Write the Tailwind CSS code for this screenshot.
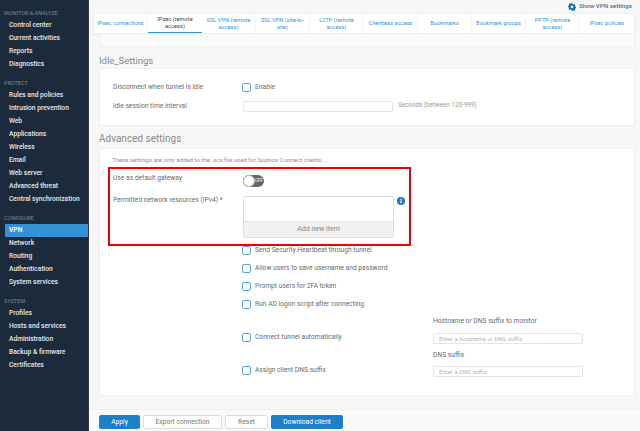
<!DOCTYPE html>
<html lang="en">
<head>
    <meta charset="UTF-8">
    <title>VPN - IPsec (remote access)</title>
    <script src="https://cdn.jsdelivr.net/npm/@tailwindcss/browser@4"></script>
</head>
<body class="w-[640px] h-[431px] overflow-hidden flex bg-[#f7f7f7] font-['Roboto','Liberation_Sans',sans-serif] text-[6.7px] text-[#6b6b6b]">
    <!-- Sidebar -->
    <nav class="w-[89px] h-full shrink-0 bg-[#1c2b3c] pt-[10px] border-r border-[#2c3a49] text-[#e4e8ec] text-[6.7px] font-medium whitespace-nowrap">
        <p class="h-[7px] leading-[7px] pl-[4px] text-[5.5px] font-normal text-[#7b8794]">MONITOR &amp; ANALYZE</p>
        <div class="mt-[2px]">
            <a class="block h-[13px] leading-[13px] pl-[9px]">Control center</a>
            <a class="block h-[13px] leading-[13px] pl-[9px]">Current activities</a>
            <a class="block h-[13px] leading-[13px] pl-[9px]">Reports</a>
            <a class="block h-[13px] leading-[13px] pl-[9px]">Diagnostics</a>
        </div>
        <p class="mt-[9px] h-[7px] leading-[7px] pl-[4px] text-[5.5px] font-normal text-[#7b8794]">PROTECT</p>
        <div class="mt-[2px]">
            <a class="block h-[13px] leading-[13px] pl-[9px]">Rules and policies</a>
            <a class="block h-[13px] leading-[13px] pl-[9px]">Intrusion prevention</a>
            <a class="block h-[13px] leading-[13px] pl-[9px]">Web</a>
            <a class="block h-[13px] leading-[13px] pl-[9px]">Applications</a>
            <a class="block h-[13px] leading-[13px] pl-[9px]">Wireless</a>
            <a class="block h-[13px] leading-[13px] pl-[9px]">Email</a>
            <a class="block h-[13px] leading-[13px] pl-[9px]">Web server</a>
            <a class="block h-[13px] leading-[13px] pl-[9px]">Advanced threat</a>
            <a class="block h-[13px] leading-[13px] pl-[9px]">Central synchronization</a>
        </div>
        <p class="mt-[9px] h-[7px] leading-[7px] pl-[4px] text-[5.5px] font-normal text-[#7b8794]">CONFIGURE</p>
        <div class="mt-[2px]">
            <a class="block h-[13px] leading-[13px] pl-[4px] ml-[5px] bg-[#3392d3] text-white font-semibold">VPN</a>
            <a class="block h-[13px] leading-[13px] pl-[9px]">Network</a>
            <a class="block h-[13px] leading-[13px] pl-[9px]">Routing</a>
            <a class="block h-[13px] leading-[13px] pl-[9px]">Authentication</a>
            <a class="block h-[13px] leading-[13px] pl-[9px]">System services</a>
        </div>
        <p class="mt-[9px] h-[7px] leading-[7px] pl-[4px] text-[5.5px] font-normal text-[#7b8794]">SYSTEM</p>
        <div class="mt-[2px]">
            <a class="block h-[13px] leading-[13px] pl-[9px]">Profiles</a>
            <a class="block h-[13px] leading-[13px] pl-[9px]">Hosts and services</a>
            <a class="block h-[13px] leading-[13px] pl-[9px]">Administration</a>
            <a class="block h-[13px] leading-[13px] pl-[9px]">Backup &amp; firmware</a>
            <a class="block h-[13px] leading-[13px] pl-[9px]">Certificates</a>
        </div>
    </nav>

    <!-- Main -->
    <main class="relative flex-1 h-full flex flex-col min-w-0">
        <div class="flex-1 min-h-0 pl-[4px] pr-[5px]">
            <div class="h-[13px] flex items-center justify-end gap-[3px] pr-[3px] text-[#4a6f8f] text-[6.2px] font-medium">
                <svg class="w-[8px] h-[8px]" viewBox="0 0 24 24" fill="#1c6ea4"><path d="M10 1h4l.7 3.2 2 .8 2.8-1.8 2.8 2.8-1.8 2.8.8 2 3.2.7v4l-3.2.7-.8 2 1.8 2.8-2.8 2.8-2.8-1.8-2 .8L14 23h-4l-.7-3.2-2-.8-2.8 1.8-2.8-2.8 1.8-2.8-.8-2L-.5 13V9l3.2-.7.8-2L1.700 3.500 4.500.7l2.800 1.800 2-.8zM12 8a4 4 0 1 0 0 8 4 4 0 0 0 0-8z" fill-rule="evenodd"/></svg>
                Show VPN settings
            </div>

            <!-- Tabs -->
            <div class="h-[21px] grid grid-cols-10 bg-white border border-[#eeeeee] text-[#3b93d3] text-center text-[5.7px] leading-[7px] shadow-[0_1px_1px_rgba(0,0,0,0.05)]">
                <a class="flex items-center justify-center border-r border-[#f3f3f3] whitespace-nowrap">IPsec connections</a>
                <a class="flex items-center justify-center px-[5px] text-[#444] border-b border-[#3392d3]">IPsec (remote access)</a>
                <a class="flex items-center justify-center px-[3px] border-r border-[#f3f3f3]">SSL VPN (remote access)</a>
                <a class="flex items-center justify-center px-[3px] border-r border-[#f3f3f3]">SSL VPN (site-to-site)</a>
                <a class="flex items-center justify-center px-[5px] border-r border-[#f3f3f3]">L2TP (remote access)</a>
                <a class="flex items-center justify-center border-r border-[#f3f3f3] whitespace-nowrap">Clientless access</a>
                <a class="flex items-center justify-center border-r border-[#f3f3f3] whitespace-nowrap">Bookmarks</a>
                <a class="flex items-center justify-center border-r border-[#f3f3f3] whitespace-nowrap">Bookmark groups</a>
                <a class="flex items-center justify-center px-[5px] border-r border-[#f3f3f3]">PPTP (remote access)</a>
                <a class="flex items-center justify-center whitespace-nowrap">IPsec policies</a>
            </div>

            <div class="ml-[6px] h-[13px] bg-[#fafafa] border border-t-0 border-[#eeeeee]"></div>

            <h2 class="ml-[6px] mt-[7px] h-[13px] leading-[13px] text-[9.5px] text-[#8a8a8a]">Idle_Settings</h2>
            <section class="ml-[6px] mt-[1px] h-[58px] bg-white border border-[#eeeeee] pl-[13px] pt-[12px]">
                <div class="flex items-center h-[12px]">
                    <span class="w-[130px]">Disconnect when tunnel is idle</span>
                    <span class="w-[9px] h-[9px] -ml-[1px] rounded-[2px] border border-[#5aa5de] mr-[4px]"></span>
                    Enable
                </div>
                <div class="flex items-center h-[12px] mt-[7px]">
                    <span class="w-[130px]">Idle session time interval</span>
                    <span class="w-[150px] h-[11px] rounded-[2px] border border-[#e4e4e4] mr-[5px]"></span>
                    <span class="text-[#9a9a9a] text-[6.3px]">Seconds (between 120-999)</span>
                </div>
            </section>

            <h2 class="ml-[6px] mt-[6px] h-[13px] leading-[13px] text-[10px] text-[#8a8a8a]">Advanced settings</h2>
            <section class="ml-[6px] mt-[3px] h-[248px] bg-white border border-[#eeeeee] pl-[13px]">
                <p class="mt-[7px] -ml-[1px] h-[8px] leading-[8px] text-[6.1px] text-[#8f8f8f]">These settings are only added to the .scx file used for Sophos Connect clients.</p>
                <div class="flex items-start mt-[11px] h-[17px]">
                    <span class="w-[130px] -mt-[2px] leading-[10px]">Use as default gateway</span>
                    <span class="relative w-[21px] h-[12px] rounded-full bg-[#666] text-white text-[4.5px] leading-[12px] pl-[12px]">
                        OFF
                        <span class="absolute left-0 top-0 w-[12px] h-[12px] rounded-full bg-white border border-[#bbb]"></span>
                    </span>
                </div>
                <div class="flex items-start mt-[4px]">
                    <span class="w-[130px] -mt-[1px] leading-[10px] whitespace-nowrap">Permitted network resources (IPv4) *</span>
                    <div class="w-[151px] h-[42px] rounded-[2px] border border-[#dddddd] flex flex-col">
                        <div class="flex-1"></div>
                        <div class="h-[16px] bg-[#f0f0f0] border-t border-[#e4e4e4] text-center leading-[15px] text-[#888] text-[7px]">Add new item</div>
                    </div>
                    <svg class="ml-[3px] mt-[1px] w-[8px] h-[8px]" viewBox="0 0 16 16"><circle cx="8" cy="8" r="8" fill="#1e78c2"/><rect x="6.800" y="7" width="2.400" height="5.500" fill="#fff"/><circle cx="8" cy="4.500" r="1.400" fill="#fff"/></svg>
                </div>
                <div class="ml-[130px] mt-[7px] flex items-center h-[10px] gap-[4px]"><span class="w-[9px] h-[9px] -ml-[1px] rounded-[2px] border border-[#5aa5de]"></span>Send Security Heartbeat through tunnel</div>
                <div class="ml-[130px] mt-[8px] flex items-center h-[10px] gap-[4px]"><span class="w-[9px] h-[9px] -ml-[1px] rounded-[2px] border border-[#5aa5de]"></span>Allow users to save username and password</div>
                <div class="ml-[130px] mt-[8px] flex items-center h-[10px] gap-[4px]"><span class="w-[9px] h-[9px] -ml-[1px] rounded-[2px] border border-[#5aa5de]"></span>Prompt users for 2FA token</div>
                <div class="ml-[130px] mt-[8px] flex items-center h-[10px] gap-[4px]"><span class="w-[9px] h-[9px] -ml-[1px] rounded-[2px] border border-[#5aa5de]"></span>Run AD logon script after connecting</div>
                <div class="ml-[130px] mt-[7px] flex">
                    <div class="w-[190px] mt-[16px] flex items-center h-[10px] gap-[4px] self-start"><span class="w-[9px] h-[9px] -ml-[1px] rounded-[2px] border border-[#5aa5de]"></span>Connect tunnel automatically</div>
                    <div class="w-[150px]">
                        <p class="h-[10px] leading-[10px]">Hostname or DNS suffix to monitor</p>
                        <div class="mt-[7px] h-[11px] rounded-[2px] border border-[#e4e4e4] pl-[5px] leading-[9px] text-[6px] text-[#b5b5b5]">Enter a hostname or DNS suffix</div>
                    </div>
                </div>
                <div class="ml-[130px] mt-[6px] flex">
                    <div class="w-[190px] mt-[15px] flex items-center h-[10px] gap-[4px] self-start"><span class="w-[9px] h-[9px] -ml-[1px] rounded-[2px] border border-[#5aa5de]"></span>Assign client DNS suffix</div>
                    <div class="w-[150px]">
                        <p class="h-[10px] leading-[10px]">DNS suffix</p>
                        <div class="mt-[6px] h-[11px] rounded-[2px] border border-[#e4e4e4] pl-[5px] leading-[9px] text-[6px] text-[#b5b5b5]">Enter a DNS suffix</div>
                    </div>
                </div>
            </section>
        </div>

        <!-- Footer buttons -->
        <footer class="h-[22px] shrink-0 bg-[#fafafa] border-t border-[#eeeeee] flex items-start gap-[3px] pl-[10px] pt-[5px] text-center">
            <button class="w-[41px] h-[14px] rounded-[2px] bg-[#1c80c9] text-white">Apply</button>
            <button class="w-[79px] h-[14px] rounded-[2px] bg-white border border-[#dcdcdc] text-[#777]">Export connection</button>
            <button class="w-[43px] h-[14px] rounded-[2px] bg-white border border-[#dcdcdc] text-[#777]">Reset</button>
            <button class="w-[72px] h-[14px] rounded-[2px] bg-[#1c80c9] text-white">Download client</button>
        </footer>

        <!-- Red highlight drawn over the screenshot -->
        <div class="absolute left-[19px] top-[167px] w-[303px] h-[79px] border-2 border-[#f00000]"></div>
    </main>
</body>
</html>
